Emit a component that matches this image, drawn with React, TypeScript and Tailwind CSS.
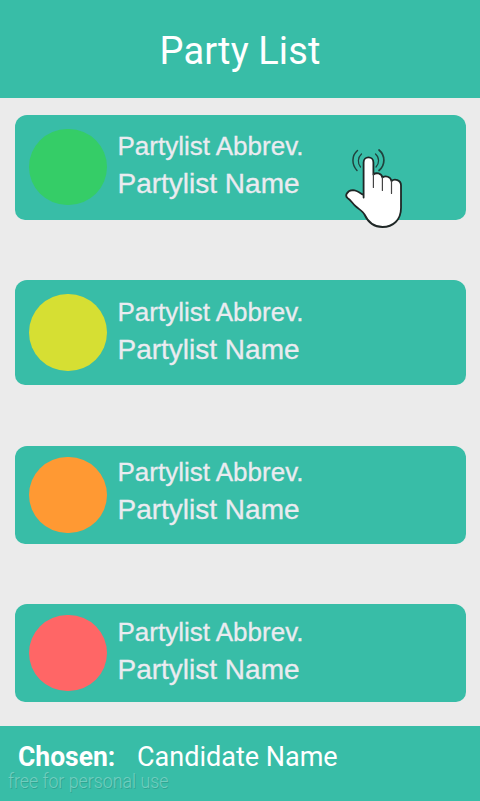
type Party = { card: string; dot: string; text: string };

const parties: Party[] = [
  { card: "h-[105px] pt-[13.5px]", dot: "bg-[#35cd67]", text: "-mt-[1.5px]" },
  { card: "mt-[60px] h-[105px] pt-[14px]", dot: "bg-[#d6df33]", text: "-mt-px" },
  { card: "mt-[61px] h-[97.5px] pt-[10.5px]", dot: "bg-[#ff9933]", text: "-mt-[3.5px]" },
  { card: "mt-[60.5px] h-[98px] pt-[10.5px]", dot: "bg-[#ff6666]", text: "-mt-[1.5px]" },
];

function TapHand() {
  return (
    <svg
      className="absolute left-[345px] top-[147px] h-[82px] w-[59px]"
      viewBox="0 0 59 82"
      fill="none"
      strokeLinecap="round"
      strokeLinejoin="round"
    >
      <g stroke="#20423d">
        <path d="M12.500 3.500C6.500 8.500 6.500 17.500 12 23.500" strokeWidth="1.500" />
        <path d="M34 3C40.500 8.500 40.500 18 34 23.500" strokeWidth="1.700" />
        <path d="M16.500 7C12.500 10.500 12.500 16.500 15.500 20" strokeWidth="1.200" />
        <path d="M30.500 7C34.500 10.500 34.500 16.500 31 20" strokeWidth="1.200" />
      </g>
      <path
        d="M18.600 50.500V15.500C18.600 8.700 28.400 8.700 28.400 15.500V27.500C31 25.300 36.500 26 37.400 30.500C40.500 28.300 45.500 29.500 46.500 34C49.500 31.500 56 32.800 56 38.500V61C56 73 48 80 37.500 80C28 80 22.500 74 19.500 67.500C18 64.500 14.500 62.500 11.500 60C7.500 57 6 53 2.800 51.200C-0.500 49 1.800 43.600 8 43.200C12 43.300 15 46 18.600 48Z"
        fill="white"
        stroke="#1f2726"
        strokeWidth="1.800"
      />
      <path d="M28.400 27V40.500M37.400 30.500V43.500M46.500 34V46.500" stroke="#444" strokeWidth="1.200" />
    </svg>
  );
}

export default function App() {
  return (
    <div className="relative flex h-[801px] w-[480px] flex-col overflow-hidden bg-[#ebebeb] font-['Liberation_Sans',Arial,sans-serif]">
      <header className="flex h-[98px] shrink-0 justify-center bg-[#38bda7] pt-[29px]">
        <h1 className="font-[Roboto,sans-serif] text-[38px] leading-[45px] tracking-[0.1px] text-white">Party List</h1>
      </header>
      <main className="h-[628px] shrink-0 pl-[15px] pr-[14px] pt-[17px]">
        {parties.map((p, i) => (
          <section
            key={i}
            className={`flex items-start rounded-t-[12px] rounded-b-[10px] bg-[#38bda7] pl-[14px] ${p.card}`}
          >
            <div className={`h-[76.5px] w-[77.5px] shrink-0 rounded-full ${p.dot}`} />
            <div
              className={`ml-[11px] whitespace-nowrap text-[#ebebf0] [-webkit-text-stroke:0.3px_#ebebf0] ${p.text}`}
            >
              <p className="text-[26px] leading-[38px]">Partylist Abbrev.</p>
              <p className="text-[28px] leading-[38px]">Partylist Name</p>
            </div>
          </section>
        ))}
      </main>
      <footer className="h-[75px] shrink-0 whitespace-nowrap bg-[#38bda7] pt-[17px] font-[Roboto,sans-serif] text-white">
        <div className="flex h-[28px] text-[27px] leading-[28px]">
          <span className="ml-[18px] w-[119px] origin-left scale-x-[0.98] font-bold">Chosen:</span>
          <span className="origin-left">Candidate Name</span>
        </div>
        <p className="ml-[8px] origin-left scale-x-[0.89] text-[20px] font-light leading-[20px] text-[#71cebf] [text-shadow:1px_1px_0_#31a592]">
          free for personal use
        </p>
      </footer>
      <TapHand />
    </div>
  );
}
